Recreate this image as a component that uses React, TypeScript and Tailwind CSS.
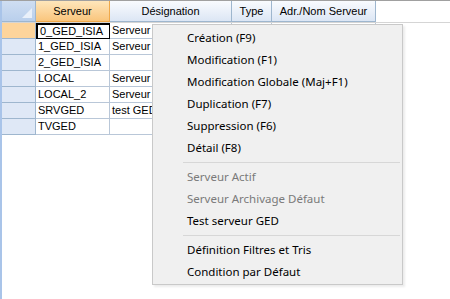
import React from "react";

// ── DATA ────────────────────────────────────────────────
const rows = [
  { serveur: "0_GED_ISIA", designation: "Serveur" },
  { serveur: "1_GED_ISIA", designation: "Serveur" },
  { serveur: "2_GED_ISIA", designation: "" },
  { serveur: "LOCAL", designation: "Serveur" },
  { serveur: "LOCAL_2", designation: "Serveur" },
  { serveur: "SRVGED", designation: "test GED" },
  { serveur: "TVGED", designation: "" },
];

type MenuEntry = { label: string; disabled?: boolean } | "sep";

const menu: MenuEntry[] = [
  { label: "Création (F9)" },
  { label: "Modification (F1)" },
  { label: "Modification Globale (Maj+F1)" },
  { label: "Duplication (F7)" },
  { label: "Suppression (F6)" },
  { label: "Détail (F8)" },
  "sep",
  { label: "Serveur Actif", disabled: true },
  { label: "Serveur Archivage Défaut", disabled: true },
  { label: "Test serveur GED" },
  "sep",
  { label: "Définition Filtres et Tris" },
  { label: "Condition par Défaut" },
];

const headCell =
  "h-[21px] flex items-center justify-center border-r border-b border-[#9eb6ce] bg-gradient-to-b from-[#f9fbfe] to-[#dce6f4] text-black";

export default function App() {
  return (
    <div
      className="relative w-[450px] h-[299px] overflow-hidden bg-white border-t border-[#a0a0a0]"
      style={{ fontFamily: '"Liberation Sans", Arial, sans-serif' }}
    >
      <div className="flex h-full">
        {/* left blue strip */}
        <div className="w-[2px] h-full bg-[#a9c4e9]" />

        <div className="flex-1 flex flex-col">
          {/* ── HEADER ─────────────────────────────── */}
          <div className="flex text-[11px] border-b border-[#d5d5d5]">
            <div className="relative w-[34px] h-[21px] border-r border-b border-[#9eb6ce] bg-gradient-to-b from-[#cfdef2] to-[#b9cfec]">
              <div className="absolute right-[3px] bottom-[3px] w-0 h-0 border-l-[10px] border-l-transparent border-b-[10px] border-b-[#e9f0fa]" />
            </div>
            <div className="w-[74px] h-[21px] flex items-center justify-center border-r border-b border-[#f0a94a] bg-gradient-to-b from-[#fee6bb] to-[#f9c57c]">
              Serveur
            </div>
            <div className={`w-[122px] ${headCell}`}>Désignation</div>
            <div className={`w-[40px] ${headCell}`}>Type</div>
            <div className={`w-[104px] ${headCell}`}>Adr./Nom Serveur</div>
            <div className="flex-1 h-[21px]" />
          </div>

          {/* ── ROWS ───────────────────────────────── */}
          {rows.map((r, i) => (
            <div key={r.serveur} className="flex h-[16px] text-[11px] leading-[15px]">
              <div
                className={`w-[34px] border-r border-b border-[#9eb6ce] ${
                  i === 0 ? "bg-[#fdd49b]" : "bg-[#dfe8f6]"
                }`}
              />
              <div
                className={`w-[74px] pl-[2px] border-r border-b border-[#b9c7d8] whitespace-nowrap overflow-hidden ${
                  i === 0 ? "border-2 border-black pl-[1px] leading-[12px]" : ""
                }`}
              >
                {r.serveur}
              </div>
              <div className="w-[122px] pl-[2px] border-r border-b border-[#b9c7d8] whitespace-nowrap overflow-hidden">
                {r.designation}
              </div>
              <div className="w-[40px] border-r border-b border-[#b9c7d8]" />
              <div className="w-[104px] border-r border-b border-[#b9c7d8]" />
            </div>
          ))}
        </div>
      </div>

      {/* ── CONTEXT MENU ───────────────────────────── */}
      <div
        className="absolute left-[152px] top-[23px] w-[251px] h-[261px] bg-[#f0f0f0] border border-[#c9c9c9] pt-[2px] shadow-[2px_2px_2px_rgba(0,0,0,0.08)]"
        style={{ fontFamily: '"Noto Sans", "Open Sans", sans-serif' }}
      >
        {menu.map((m, i) =>
          m === "sep" ? (
            <div key={i} className="h-[7px] flex items-center pl-[30px] pr-[2px]">
              <div className="w-full h-px bg-[#d7d7d7]" />
            </div>
          ) : (
            <div
              key={i}
              className={`h-[22px] flex items-center pl-[34px] text-[11.5px] ${
                m.disabled ? "text-[#7a7a7a]" : "text-black"
              }`}
            >
              {m.label}
            </div>
          )
        )}
      </div>
    </div>
  );
}
